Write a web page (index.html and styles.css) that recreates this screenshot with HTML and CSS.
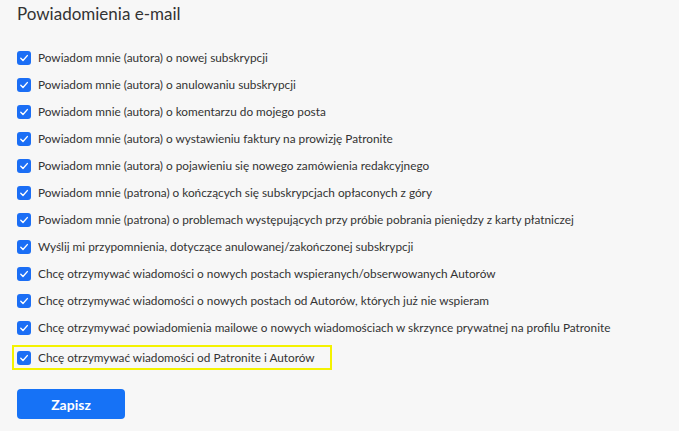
FILE: index.html
```html
<!DOCTYPE html>
<html>
<head>
    <title>Powiadomienia e-mail</title>
    <meta charset="utf-8">
    <link rel="stylesheet" href="styles.css">
</head>
<body>
<div class="settings">
    <h2 class="title">Powiadomienia e-mail</h2>
    <ul class="options">
        <li class="option"><span class="box"><svg viewBox="0 0 14 14"><path d="M3.8 7.3 L6 9.5 L10.3 4.6"/></svg></span>Powiadom mnie (autora) o nowej subskrypcji</li>
        <li class="option"><span class="box"><svg viewBox="0 0 14 14"><path d="M3.8 7.3 L6 9.5 L10.3 4.6"/></svg></span>Powiadom mnie (autora) o anulowaniu subskrypcji</li>
        <li class="option"><span class="box"><svg viewBox="0 0 14 14"><path d="M3.8 7.3 L6 9.5 L10.3 4.6"/></svg></span>Powiadom mnie (autora) o komentarzu do mojego posta</li>
        <li class="option"><span class="box"><svg viewBox="0 0 14 14"><path d="M3.8 7.3 L6 9.5 L10.3 4.6"/></svg></span>Powiadom mnie (autora) o wystawieniu faktury na prowizję Patronite</li>
        <li class="option"><span class="box"><svg viewBox="0 0 14 14"><path d="M3.8 7.3 L6 9.5 L10.3 4.6"/></svg></span>Powiadom mnie (autora) o pojawieniu się nowego zamówienia redakcyjnego</li>
        <li class="option"><span class="box"><svg viewBox="0 0 14 14"><path d="M3.8 7.3 L6 9.5 L10.3 4.6"/></svg></span>Powiadom mnie (patrona) o kończących się subskrypcjach opłaconych z góry</li>
        <li class="option"><span class="box"><svg viewBox="0 0 14 14"><path d="M3.8 7.3 L6 9.5 L10.3 4.6"/></svg></span>Powiadom mnie (patrona) o problemach występujących przy próbie pobrania pieniędzy z karty płatniczej</li>
        <li class="option"><span class="box"><svg viewBox="0 0 14 14"><path d="M3.8 7.3 L6 9.5 L10.3 4.6"/></svg></span>Wyślij mi przypomnienia, dotyczące anulowanej/zakończonej subskrypcji</li>
        <li class="option"><span class="box"><svg viewBox="0 0 14 14"><path d="M3.8 7.3 L6 9.5 L10.3 4.6"/></svg></span>Chcę otrzymywać wiadomości o nowych postach wspieranych/obserwowanych Autorów</li>
        <li class="option"><span class="box"><svg viewBox="0 0 14 14"><path d="M3.8 7.3 L6 9.5 L10.3 4.6"/></svg></span>Chcę otrzymywać wiadomości o nowych postach od Autorów, których już nie wspieram</li>
        <li class="option"><span class="box"><svg viewBox="0 0 14 14"><path d="M3.8 7.3 L6 9.5 L10.3 4.6"/></svg></span>Chcę otrzymywać powiadomienia mailowe o nowych wiadomościach w skrzynce prywatnej na profilu Patronite</li>
        <li class="option marked"><span class="box"><svg viewBox="0 0 14 14"><path d="M3.8 7.3 L6 9.5 L10.3 4.6"/></svg></span>Chcę otrzymywać wiadomości od Patronite i Autorów</li>
    </ul>
    <button class="save">Zapisz</button>
</div>
</body>
</html>
```

FILE: styles.css
```css
* {
    margin: 0;
    padding: 0;
    box-sizing: border-box;
}

body {
    background: #f7f7f7;
    font-family: Lato, "Noto Sans", sans-serif;
    color: #333;
}

.settings {
    padding: 0 0 0 17px;
}

.title {
    font-size: 17px;
    font-weight: 400;
    line-height: 24px;
    padding-top: 2px;
    color: #333;
}

.options {
    list-style: none;
    margin-top: 18px;
    display: flex;
    flex-direction: column;
}

.option {
    display: flex;
    align-items: center;
    gap: 7px;
    height: 27px;
    font-size: 11.8px;
    white-space: nowrap;
}

.box {
    width: 14px;
    height: 14px;
    flex: none;
    border-radius: 3px;
    background: #1b6ef5;
}

.box svg {
    display: block;
    width: 14px;
    height: 14px;
    fill: none;
    stroke: #fff;
    stroke-width: 1.4;
    stroke-linecap: round;
    stroke-linejoin: round;
}

.marked {
    width: 320px;
    height: 25px;
    margin: 4px 0 0 -5px;
    padding: 0 3px;
    border: 2px solid #f4f200;
}

.save {
    margin-top: 19px;
    width: 108px;
    height: 30px;
    border: none;
    border-radius: 4px;
    background: #1672f6;
    color: #fff;
    font-family: Lato, "Noto Sans", sans-serif;
    font-size: 14px;
    font-weight: 700;
}
```
